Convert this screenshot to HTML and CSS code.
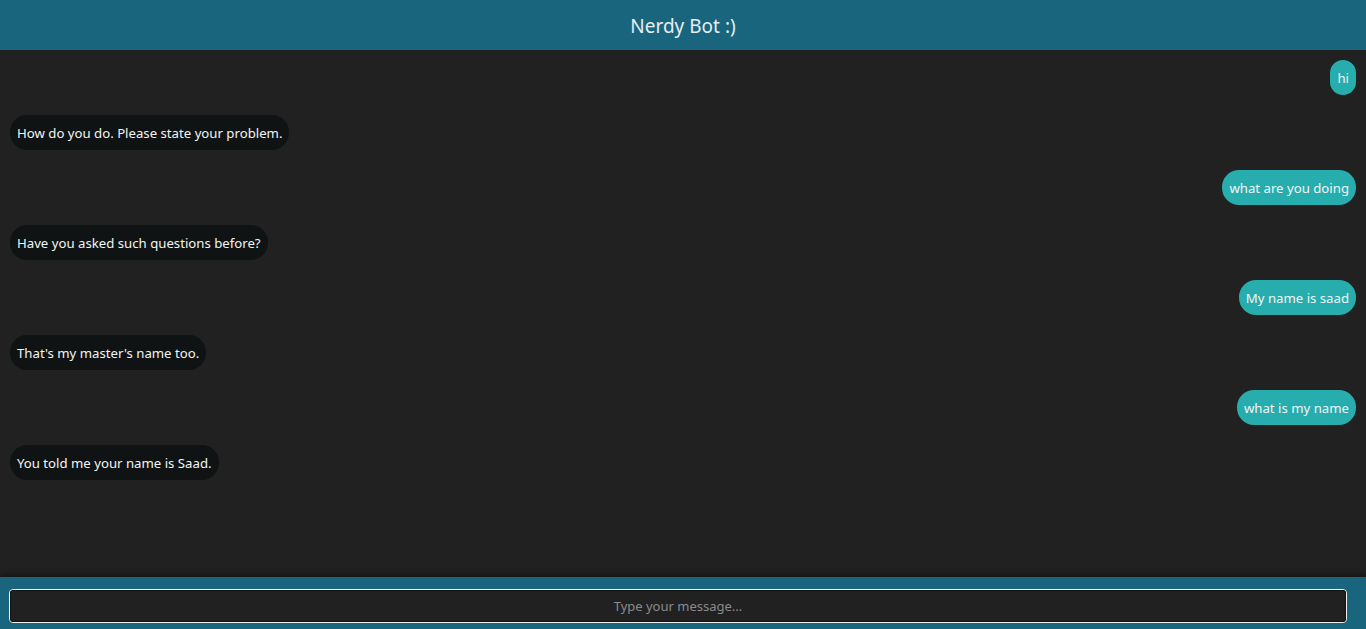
FILE: index.html
```html
<!DOCTYPE html>
<html>
<head>
<meta charset="utf-8">
<link rel="stylesheet" href="styles.css">
<title>Nerdy Bot</title>
</head>
<body>
<div class="app">
  <header class="header">Nerdy Bot :)</header>
  <main class="chat">
    <div class="row user"><div class="bubble">hi</div></div>
    <div class="row bot"><div class="bubble">How do you do. Please state your problem.</div></div>
    <div class="row user"><div class="bubble">what are you doing</div></div>
    <div class="row bot"><div class="bubble">Have you asked such questions before?</div></div>
    <div class="row user"><div class="bubble">My name is saad</div></div>
    <div class="row bot"><div class="bubble">That's my master's name too.</div></div>
    <div class="row user"><div class="bubble">what is my name</div></div>
    <div class="row bot"><div class="bubble">You told me your name is Saad.</div></div>
  </main>
  <footer class="footer">
    <input class="input" type="text" placeholder="Type your message...">
  </footer>
</div>
</body>
</html>
```
FILE: styles.css
```css
html, body {
  margin: 0;
  padding: 0;
  height: 100%;
  background: #212121;
  font-family: "Segoe UI", "Noto Sans", "Open Sans", sans-serif;
}
.app {
  display: flex;
  flex-direction: column;
  height: 100vh;
}
.header {
  height: 50px;
  flex: 0 0 50px;
  box-sizing: border-box;
  padding-top: 2px;
  background: #19657e;
  color: #e6eef2;
  font-size: 19px;
  display: flex;
  align-items: center;
  justify-content: center;
}
.chat {
  flex: 1;
  display: flex;
  flex-direction: column;
  gap: 20px;
  padding: 10px 10px;
  overflow: hidden;
}
.row {
  display: flex;
}
.row.user { justify-content: flex-end; }
.row.bot { justify-content: flex-start; }
.bubble {
  height: 35px;
  box-sizing: border-box;
  padding: 0 7px;
  border-radius: 17px;
  display: flex;
  align-items: center;
  font-size: 13.2px;
  color: #f2f5f5;
}
.user .bubble { background: #27adad; }
.bot .bubble { background: #101313; }
.footer {
  flex: 0 0 52px;
  background: #19657e;
  box-shadow: 0 -3px 5px rgba(0,0,0,0.35);
  padding: 12px 19px 6px 9px;
  box-sizing: border-box;
  display: flex;
}
.input {
  flex: 1;
  height: 34px;
  box-sizing: border-box;
  background: #212121;
  border: 1px solid #f2f2f2;
  outline: 1px solid #111;
  outline-offset: -2px;
  border-radius: 4px;
  text-align: center;
  font-family: inherit;
  font-size: 13px;
  color: #ddd;
}
.input::placeholder { color: #8a8a8a; }
```
